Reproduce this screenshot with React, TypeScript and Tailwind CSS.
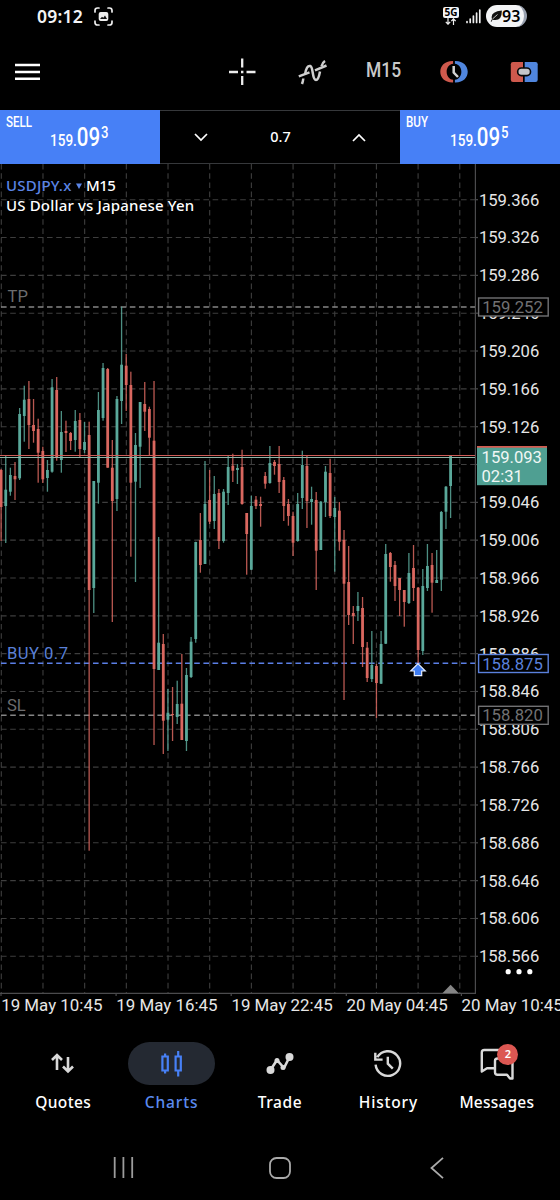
import React from "react";

const UP = "#5aa89a";
const DOWN = "#d9675f";

// [direction, wick top, wick bottom, body top, body bottom]
type Candle = [0 | 1, number, number, number, number];

const candles: Candle[] = [
  [0, 469, 541, 470, 507], [1, 456, 543, 489.7, 506], [1, 467.7, 495.7, 475, 491.7],
  [0, 462, 500, 476, 479.3], [1, 408, 480, 414, 478.3], [1, 385.7, 441.7, 399.7, 416],
  [0, 381, 449, 399, 425], [0, 399, 442.7, 425, 431], [0, 418.7, 482.7, 429, 452.7],
  [0, 446.7, 483, 451, 479.3], [1, 460, 491.7, 470, 478], [1, 379, 472.7, 387.3, 471.7],
  [0, 377, 460.7, 390, 457], [1, 411, 472.7, 432, 460], [0, 420.7, 452, 431, 433],
  [0, 432, 450, 433, 441], [1, 410, 451.7, 421, 440], [0, 413, 457, 420, 449],
  [1, 422, 453, 442, 450], [0, 421.7, 850.7, 435, 590], [1, 481, 613, 481, 588],
  [1, 392, 503.7, 410, 482.7], [1, 363, 420.7, 368, 418], [0, 368, 467.7, 369, 467.7],
  [0, 440, 622, 467.7, 501], [1, 396, 511, 399, 499], [1, 306.7, 424, 364.7, 401],
  [0, 354, 411, 365.7, 385], [0, 371.7, 556.7, 385, 482.7], [1, 433, 582, 445, 481.7],
  [1, 402, 488, 402, 446.7], [0, 382, 431, 404, 411.7], [0, 406.7, 456, 409, 437.7],
  [0, 381, 745, 440.7, 669], [1, 537, 670, 642.7, 670], [0, 634, 754, 644, 720.7],
  [1, 689, 751, 712.7, 719.7], [0, 687, 741, 714, 715], [1, 680.7, 724, 704, 717],
  [0, 654, 740, 703.7, 740], [1, 668, 751, 675, 741], [1, 637, 678, 641.7, 677],
  [1, 541.7, 642.7, 542, 639], [0, 513, 572.7, 540, 565], [1, 461, 564, 504, 564],
  [0, 470, 524, 500, 521.7], [1, 476, 529, 494, 521], [0, 489, 549, 493, 541],
  [1, 489, 542.7, 491.7, 541], [1, 456, 505, 467, 493], [0, 453.7, 482, 465.7, 470.7],
  [1, 464, 484, 468, 470], [0, 449.7, 504.7, 467, 504], [0, 513, 574.7, 513, 534],
  [1, 495.7, 570, 506, 569.7], [0, 496, 509, 499.7, 506], [0, 496.7, 526.7, 504, 506],
  [0, 472, 488.7, 476, 483.7], [1, 446, 483.7, 463, 483], [0, 460, 474.7, 462, 466],
  [0, 446, 493, 464, 482], [0, 477, 521, 480, 506], [0, 499, 525.7, 504, 516],
  [0, 511.7, 556, 516, 542.7], [1, 493, 541.7, 504, 541], [1, 450.7, 509, 465, 498],
  [0, 456, 528, 466, 501], [1, 486.7, 524.7, 499, 502], [0, 492, 590, 500, 550.7],
  [1, 501, 550, 501.7, 550], [1, 466, 517, 471.7, 502], [0, 458.7, 518, 473, 516],
  [1, 497, 571.7, 508, 517], [0, 502, 550.7, 510.7, 541.7], [0, 530, 700, 540, 583.7],
  [0, 546, 625, 582, 615], [0, 606, 644, 613, 616], [1, 592, 621, 606, 611],
  [0, 597, 667, 608, 647], [0, 642, 682, 647.7, 678], [1, 631, 682, 665, 679],
  [0, 664, 718, 666, 683], [1, 631, 684, 644, 683.7], [1, 544, 644, 554, 643.7],
  [0, 552, 581.7, 553, 567], [0, 561, 601, 565, 586], [0, 578, 616, 578, 590],
  [0, 590, 626.7, 590, 602], [1, 553, 604, 573, 603], [0, 545, 601, 568, 588],
  [0, 587, 663, 587.7, 650], [1, 569, 655, 586, 651], [1, 544, 591, 566, 588],
  [0, 553, 612.7, 565, 582.7], [1, 550, 583, 580, 583], [1, 511, 591, 512, 579.7],
  [1, 486, 529, 486.7, 511.7], [1, 456, 518, 456, 486],
];

const prices = Array.from({ length: 21 }, (_, i) => (159.366 - i * 0.04).toFixed(3));
const columns = Array.from({ length: 12 }, (_, i) => 1.3 + i * 41.68);
const dates = ["19 May 10:45", "19 May 16:45", "19 May 22:45", "20 May 04:45", "20 May 10:45"];

function PriceTag({ y, label, color }: { y: number; label: string; color: string }) {
  return (
    <g>
      <rect x="478.6" y={y - 9} width="69.6" height="18" fill="#000" stroke={color} strokeWidth="1.4" />
      <text x="482.2" y={y + 6} fill={color} fontSize="16.7">{label}</text>
    </g>
  );
}

function Chart() {
  return (
    <svg className="block h-[856px] w-[560px] font-[Roboto,sans-serif]" viewBox="0 164 560 856">
      <g stroke="#3e3e3e" strokeWidth="1.1" strokeDasharray="5.6 3.6" fill="none">
        {columns.map((x) => (
          <line key={x} x1={x} x2={x} y1="164" y2="993" />
        ))}
        {prices.map((p, i) => (
          <line key={p} x1="1" x2="475" y1={199.7 + i * 37.83} y2={199.7 + i * 37.83} />
        ))}
      </g>
      <g stroke="#4b4b4d" strokeWidth="1.2">
        <line x1="475.4" x2="475.4" y1="164" y2="993.5" />
        <line x1="0" x2="476" y1="993.3" y2="993.3" />
        {dates.map((d, i) => (
          <line key={i} x1={1 + i * 115.1} x2={1 + i * 115.1} y1="993" y2="996" />
        ))}
        {prices.map((p, i) => (
          <line key={p} x1="475" x2="478" y1={199.7 + i * 37.83} y2={199.7 + i * 37.83} />
        ))}
      </g>
      <g fill="#e6e6e6" fontSize="16.6">
        {prices.map((p, i) => (
          <text key={p} x="478.9" y={205.6 + i * 37.83}>{p}</text>
        ))}
        {dates.map((d, i) => (
          <text key={i} x={1.2 + i * 115.1} y="1011" fontSize="16.9">{d}</text>
        ))}
      </g>
      <g strokeWidth="1.5" strokeDasharray="5.6 3.6">
        <line x1="1" x2="475" y1="307" y2="307" stroke="#858585" />
        <line x1="1" x2="475" y1="663.3" y2="663.3" stroke="#5b7fe6" />
        <line x1="1" x2="475" y1="715.2" y2="715.2" stroke="#858585" />
      </g>
      <g fontSize="16.6" fill="#6c6c6e">
        <text x="7.5" y="302.3">TP</text>
        <text x="7" y="658.7" fill="#5a80d8" textLength="61">BUY 0.7</text>
        <text x="7" y="711">SL</text>
      </g>
      <g>
        {candles.map(([up, high, low, top, bottom], i) => {
          const x = 1.1 + i * 4.634;
          const color = up ? UP : DOWN;
          return (
            <g key={i} fill={color}>
              <rect x={x - 0.65} y={high} width="1.3" height={low - high} opacity="0.85" />
              <rect x={x - 1.4} y={top} width="2.8" height={bottom - top} />
            </g>
          );
        })}
      </g>
      <line x1="0" x2="475" y1="455.5" y2="455.5" stroke="#cf5d58" strokeWidth="1.2" />
      <line x1="0" x2="475" y1="457.5" y2="457.5" stroke="#8fb5a8" strokeWidth="1.2" />
      <path d="M418 663.6l7.3 7.4h-3.6v4.6h-7.4V671h-3.6z" fill="#3f7df2" stroke="#e6eeff" strokeWidth="1.2" />
      <path d="M442.4 993.3l8.2-8.6 8.2 8.6z" fill="#858585" />
      <PriceTag y={307} label="159.252" color="#717173" />
      <PriceTag y={663.5} label="158.875" color="#5a80dc" />
      <PriceTag y={715.3} label="158.820" color="#717173" />
      <rect x="477" y="446.2" width="70" height="39" fill="#4f9f92" />
      <rect x="477" y="446" width="70" height="1.7" fill="#d45b50" />
      <g fill="#f0f7f5" fontSize="16.6">
        <text x="481.6" y="463.2">159.093</text>
        <text x="481.5" y="482.4">02:31</text>
      </g>
      <g fill="#fff">
        <circle cx="508.2" cy="971.7" r="2.6" />
        <circle cx="519" cy="971.7" r="2.6" />
        <circle cx="529.8" cy="971.7" r="2.6" />
      </g>
    </svg>
  );
}

function StatusBar() {
  return (
    <div className="flex h-9 items-start justify-between pt-[5px] pr-[33px] pl-[37px]">
      <div className="flex items-center gap-[9px]">
        <span className="w-[48px] text-[17.5px] leading-[23px] font-semibold tracking-[0.2px] text-gray-100">09:12</span>
        <svg className="size-[19px]" viewBox="0 0 19 19" fill="none" stroke="#eee" strokeWidth="1.7" strokeLinecap="round">
          <path d="M1 5V3.5Q1 1 3.500 1H5M14 1h1.500Q18 1 18 3.500V5M18 14v1.500Q18 18 15.500 18H14M5 18H3.500Q1 18 1 15.500V14" />
          <rect x="4.700" y="5" width="9.600" height="9" rx="2" fill="#eee" stroke="none" />
          <path d="M6 12l2-2.200 1.300 1 1.700-2.300 2 3.500z" fill="#111" stroke="none" />
        </svg>
      </div>
      <div className="flex items-start">
        <div className="flex w-4 flex-col items-center pt-[2px]">
          <span className="h-[11px] w-4 rounded-[2px] bg-gray-100 text-center text-[10px] leading-[11px] font-bold text-black">5G</span>
          <svg className="h-[7px] w-3" viewBox="0 0 12 7" fill="none" stroke="#eee" strokeWidth="1.200">
            <path d="M3 0v6M.8 3.800L3 6.200l2.200-2.400M8.500 7V1M6.300 3.200l2.200-2.400 2.200 2.400" />
          </svg>
        </div>
        <svg className="mt-[3px] ml-[7px] h-4 w-[15px]" viewBox="0 0 15 16" stroke="#eee" strokeWidth="1.700" strokeLinecap="round">
          <path d="M1 13.500v1M4.200 11v3.500M7.400 8v6.500M10.600 5v9.500M13.800 2v12.500" />
        </svg>
        <div className="ml-[5px] flex h-[22px] w-[41px] items-center rounded-full border-r-[3px] border-gray-400 bg-gray-100 pl-[4px] text-black">
          <svg className="size-3" viewBox="0 0 12 12">
            <path d="M.7 11.500L2 9Q-.3 2 11.800.5 12.200 11 4 10 2.600 9.800 2.500 9.700L1.500 11.800z" fill="#111" />
            <path d="M2.500 9L7.500 4.500" stroke="#eee" strokeWidth=".8" />
          </svg>
          <span className="text-[16px] leading-none font-semibold">93</span>
        </div>
      </div>
    </div>
  );
}

function Toolbar() {
  return (
    <div className="flex h-[74px] items-center pr-[21px] pb-[2px] pl-[15px]">
      <svg className="h-[18px] w-[25px]" viewBox="0 0 25 18" stroke="#fff" strokeWidth="2.400">
        <path d="M0 2h25M0 9h25M0 15.800h25" />
      </svg>
      <svg className="ml-[188px] size-[28px]" viewBox="0 0 28 28" stroke="#ededed" strokeWidth="2.300">
        <path d="M1 14h9M18.500 14h9M14.200 .5v9M14.200 18v9M13 14h2.400" />
      </svg>
      <svg className="ml-[42px] h-[25px] w-[29px]" viewBox="0 0 29 25" fill="none" stroke="#cfcfcf" strokeWidth="2.500">
        <path d="M.8 16.300L11.500 12.300M17 10.300L28.500 5.500" />
        <path d="M4 24Q5 21.500 5.300 18.500M7 14.500Q8.500 5 12.300 6C15.500 7 14 20 18 20Q20.500 20 22 11.500M23.500 6.300Q24.500 2.500 27 1" />
      </svg>
      <div className="ml-[39px] w-[38px] text-[#c9c9c9] font-[Roboto,sans-serif]">
        <span className="inline-block origin-left scale-x-[.83] text-[21px] leading-none font-medium">M15</span>
      </div>
      <svg className="ml-[36px] h-[26px] w-[28px]" viewBox="0 0 28 26" fill="none">
        <path d="M13.100 2C-4 1.500-4 24 13.100 23.500V20.800C4.500 20 4.500 5.500 13.100 4.700z" fill="#ce594d" />
        <path d="M14.900 2C32 1.500 32 24 14.900 23.500V20.800C23.500 20 23.500 5.500 14.900 4.700z" fill="#5086de" />
        <path d="M13.700 7v6.500l4.300 4.500" stroke="#d2d2d2" strokeWidth="2.500" />
      </svg>
      <svg className="ml-[42px] h-[22px] w-[28px]" viewBox="0 0 28 22">
        <path d="M3 1h10v20H3Q.8 21 .8 18.800V3.200Q.8 1 3 1z" fill="#ce594d" />
        <path d="M14.700 1H25.500Q27.700 1 27.700 3.200V18.800Q27.700 21 25.500 21H14.700z" fill="#5086de" />
        <rect x="7.700" y="7" width="12.800" height="7.600" rx="3.600" fill="#c4c6ca" stroke="#080808" strokeWidth="1.600" />
      </svg>
    </div>
  );
}

function PriceButton({ side, tail }: { side: string; tail: string }) {
  return (
    <button className="flex h-[54px] w-[160px] flex-col items-start bg-[#4780f6] pt-[4px] text-left text-white font-[Roboto,sans-serif]">
      <span className="ml-[6px] inline-block origin-left scale-x-[.8] text-[14.5px] leading-[17px] font-medium">{side}</span>
      <span className="-mt-[2px] ml-[50px] flex w-[90px] origin-left scale-x-[.82] items-baseline leading-[17px] font-medium">
        <span className="text-[16.5px]">159.</span>
        <span className="text-[25px] leading-[17px]">09</span>
        <span className="relative -top-[8px] ml-px text-[16px] leading-[10px]">{tail}</span>
      </span>
    </button>
  );
}

function TradeBar() {
  return (
    <div className="flex h-[54px]">
      <PriceButton side="SELL" tail="3" />
      <div className="flex w-[240px] items-center border-y border-[#36383b]">
        <svg className="ml-[34px] h-[9px] w-[14px]" viewBox="0 0 14 9" fill="none" stroke="#fff" strokeWidth="1.700">
          <path d="M1 1l6 6 6-6" />
        </svg>
        <span className="ml-[52px] w-[41px] text-center text-[14.5px] font-medium">0.7</span>
        <svg className="ml-[51px] h-[9px] w-[14px]" viewBox="0 0 14 9" fill="none" stroke="#fff" strokeWidth="1.700">
          <path d="M1 8l6-6 6 6" />
        </svg>
      </div>
      <PriceButton side="BUY" tail="5" />
    </div>
  );
}

const icons: Record<string, React.ReactNode> = {
  Quotes: (
    <svg className="size-7" viewBox="0 0 28 28" fill="none" stroke="#d9d9d9" strokeWidth="2.600">
      <path d="M8 20V5.500M3 10l5-5 5 5M19 7v14M14 16.500l5 5 5-5" />
    </svg>
  ),
  Charts: (
    <svg className="size-7" viewBox="0 0 28 28" fill="none" stroke="#4780f6" strokeWidth="2.200">
      <path d="M4.400 6.500h5.400v14H4.400zM7.100 3.500v3M7.100 20.500v3M17.600 6.500h5.200v14h-5.200zM20.200 1v5.500M20.200 20.500v6" />
    </svg>
  ),
  Trade: (
    <svg className="size-7" viewBox="0 0 28 28" fill="none" stroke="#d9d9d9" strokeWidth="2.600">
      <path d="M4.500 20L11 10l7 8 5.500-11" strokeLinejoin="round" />
      <g fill="#d9d9d9" stroke="none">
        <circle cx="4.500" cy="20" r="4" /><circle cx="11" cy="10.500" r="2.500" />
        <circle cx="17" cy="17.500" r="2.500" /><circle cx="23.500" cy="7" r="4" />
      </g>
    </svg>
  ),
  History: (
    <svg className="size-7" viewBox="0 0 28 28" fill="none" stroke="#d9d9d9" strokeWidth="2.400">
      <path d="M1.600 14.700A12.300 12.300 0 1 0 3.300 7.200M1.300 2.800v6.800h7.300M13.800 6.700v7l5 5" />
    </svg>
  ),
  Messages: (
    <svg className="h-8 w-9" viewBox="0 0 36 32" fill="none" stroke="#d9d9d9" strokeWidth="2.400" strokeLinejoin="round">
      <path d="M15 20.300H8L2.800 23.500V4.500Q2.800 2 5.300 2h18Q25.500 2 25.500 4.500V9M18.500 10.500H31Q33.500 10.500 33.500 13V30.500L31 30.500 28 26.800H18.500Q16 26.800 16 24.300V13Q16 10.500 18.500 10.500z" />
    </svg>
  ),
};

const labelSpacing: Record<string, string> = {
  Quotes: "tracking-[0.4px]",
  Charts: "tracking-[0.9px]",
  Trade: "tracking-[0.6px]",
  History: "tracking-[0.8px]",
  Messages: "tracking-[0.2px]",
};

function BottomNav() {
  return (
    <nav className="grid h-[115px] grid-cols-5 px-[9px] pt-[22px]">
      {Object.keys(icons).map((name) => {
        const active = name === "Charts";
        return (
          <div key={name} className="flex flex-col items-center">
            <div className={"relative flex h-[43px] w-[87px] items-center justify-center rounded-full " + (active ? "bg-[#242932]" : "")}>
              {icons[name]}
              {name === "Messages" && (
                <span className="absolute top-[2px] left-[44px] flex size-[21px] items-center justify-center rounded-full bg-[#dc5752] text-[11px] font-semibold text-white">2</span>
              )}
            </div>
            <span className={"mt-[6px] text-[15.5px] leading-[22px] font-medium " + labelSpacing[name] + (active ? " text-[#5b8bef]" : " text-white")}>
              {name}
            </span>
          </div>
        );
      })}
    </nav>
  );
}

function SystemNav() {
  return (
    <div className="flex h-[65px] items-center pl-[113px]">
      <svg className="h-[21px] w-[21px]" viewBox="0 0 21 21" stroke="#9c9c9c" strokeWidth="1.800">
        <path d="M1.700 0v21M10.400 0v21M19.200 0v21" />
      </svg>
      <svg className="ml-[135px] size-[22px]" viewBox="0 0 22 22" fill="none" stroke="#aaa" strokeWidth="1.800">
        <rect x="1" y="1" width="20" height="20" rx="6.500" />
      </svg>
      <svg className="ml-[139px] h-[22px] w-[14px]" viewBox="0 0 14 22" fill="none" stroke="#aaa" strokeWidth="1.800">
        <path d="M13 .8L1.500 11 13 21.200" />
      </svg>
    </div>
  );
}

export default function App() {
  return (
    <div className="flex h-[1200px] w-[560px] flex-col overflow-hidden bg-black text-white font-['Noto_Sans',sans-serif]">
      <StatusBar />
      <Toolbar />
      <TradeBar />
      <main className="relative h-[856px]">
        <Chart />
        <div className="absolute top-[11px] left-[6px] text-[15px] leading-[21px] font-medium">
          <div className="flex items-center">
            <span className="w-[70px] tracking-[0.2px] text-[#5b85e6]">USDJPY.x</span>
            <svg className="size-[6px]" viewBox="0 0 6 6"><path d="M0 .5h6L3 6z" fill="#5b85e6" /></svg>
            <span className="ml-1 tracking-[-0.5px]">M15</span>
          </div>
          <div className="-mt-px tracking-[0.17px] whitespace-nowrap">US Dollar vs Japanese Yen</div>
        </div>
      </main>
      <BottomNav />
      <SystemNav />
    </div>
  );
}
